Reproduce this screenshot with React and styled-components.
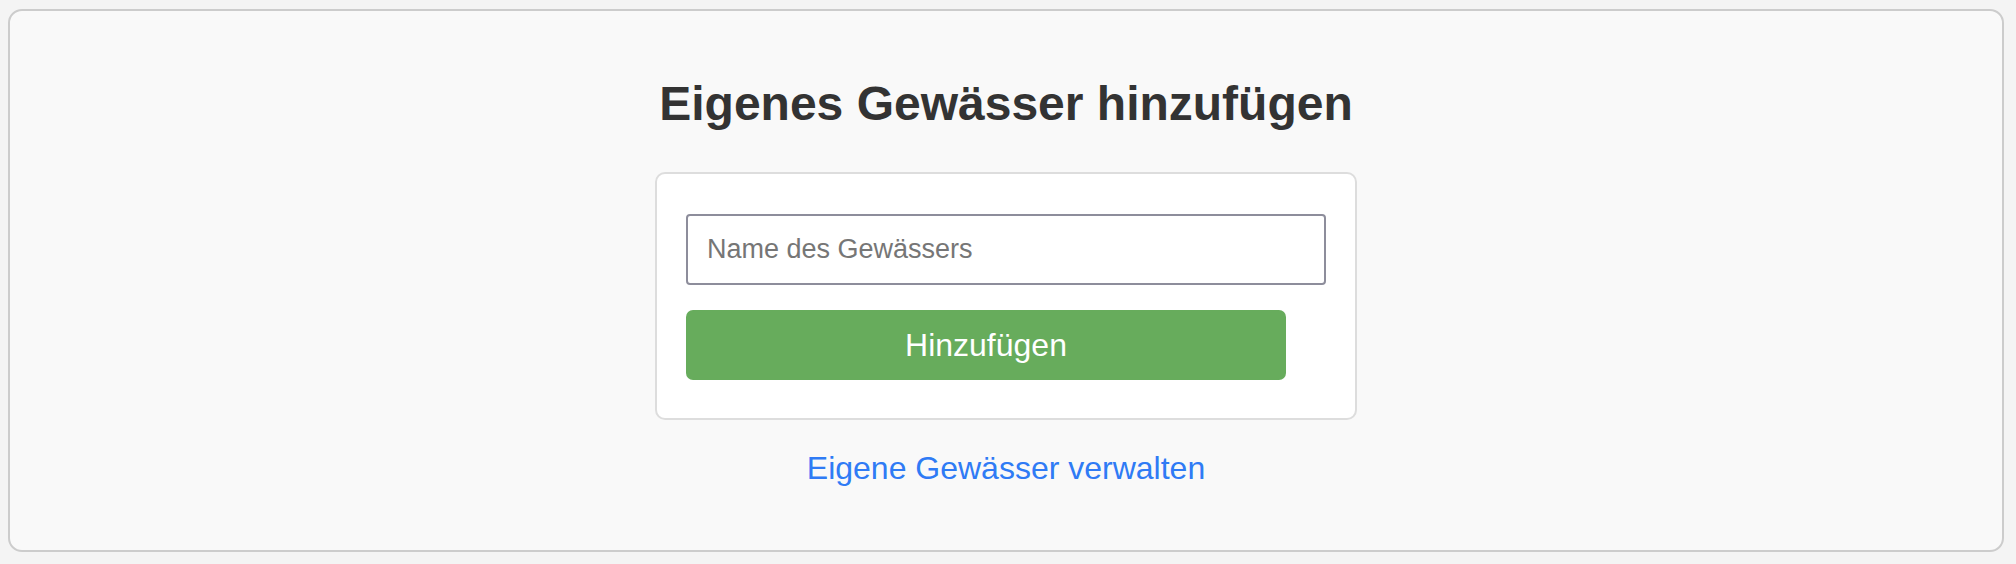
import React from "react";
import styled, { createGlobalStyle } from "styled-components";

const GlobalStyle = createGlobalStyle`
  html, body {
    margin: 0;
    padding: 0;
    background: #f4f4f4;
    font-family: "Liberation Sans", Arial, Helvetica, sans-serif;
  }
  body {
    padding: 9px 12px 12px 8px;
  }
  * {
    box-sizing: border-box;
  }
`;

const Panel = styled.section`
  background: #f9f9f9;
  border: 2px solid #cccccc;
  border-radius: 14px;
  padding: 65px 20px 63px;
  display: flex;
  flex-direction: column;
  align-items: center;
`;

const Title = styled.h1`
  margin: 0;
  font-size: 48px;
  line-height: 56px;
  font-weight: 700;
  color: #333333;
`;

const Card = styled.form`
  margin-top: 40px;
  width: 702px;
  background: #ffffff;
  border: 2px solid #dddddd;
  border-radius: 10px;
  padding: 40px 29px 38px;
  display: flex;
  flex-direction: column;
  gap: 25px;
`;

const Input = styled.input`
  width: 100%;
  height: 71px;
  border: 2px solid #8d8d9b;
  border-radius: 4px;
  padding: 0 19px;
  font-family: inherit;
  font-size: 27px;
  color: #333333;
  background: #ffffff;

  &::placeholder {
    color: #767676;
  }

  &:focus {
    outline: none;
  }
`;

const Button = styled.button`
  width: 600px;
  height: 70px;
  border: none;
  border-radius: 7px;
  background: #67ac5c;
  color: #ffffff;
  font-family: inherit;
  font-size: 32px;
  cursor: pointer;
`;

const ManageLink = styled.a`
  margin-top: 30px;
  font-size: 32px;
  line-height: 37px;
  color: #2f7bf5;
  text-decoration: none;
`;

const App = () => {
  return (
    <>
      <GlobalStyle />
      <Panel>
        <Title>Eigenes Gewässer hinzufügen</Title>
        <Card onSubmit={(e) => e.preventDefault()}>
          <Input type="text" placeholder="Name des Gewässers" />
          <Button type="submit">Hinzufügen</Button>
        </Card>
        <ManageLink href="#">Eigene Gewässer verwalten</ManageLink>
      </Panel>
    </>
  );
};

export default App;
